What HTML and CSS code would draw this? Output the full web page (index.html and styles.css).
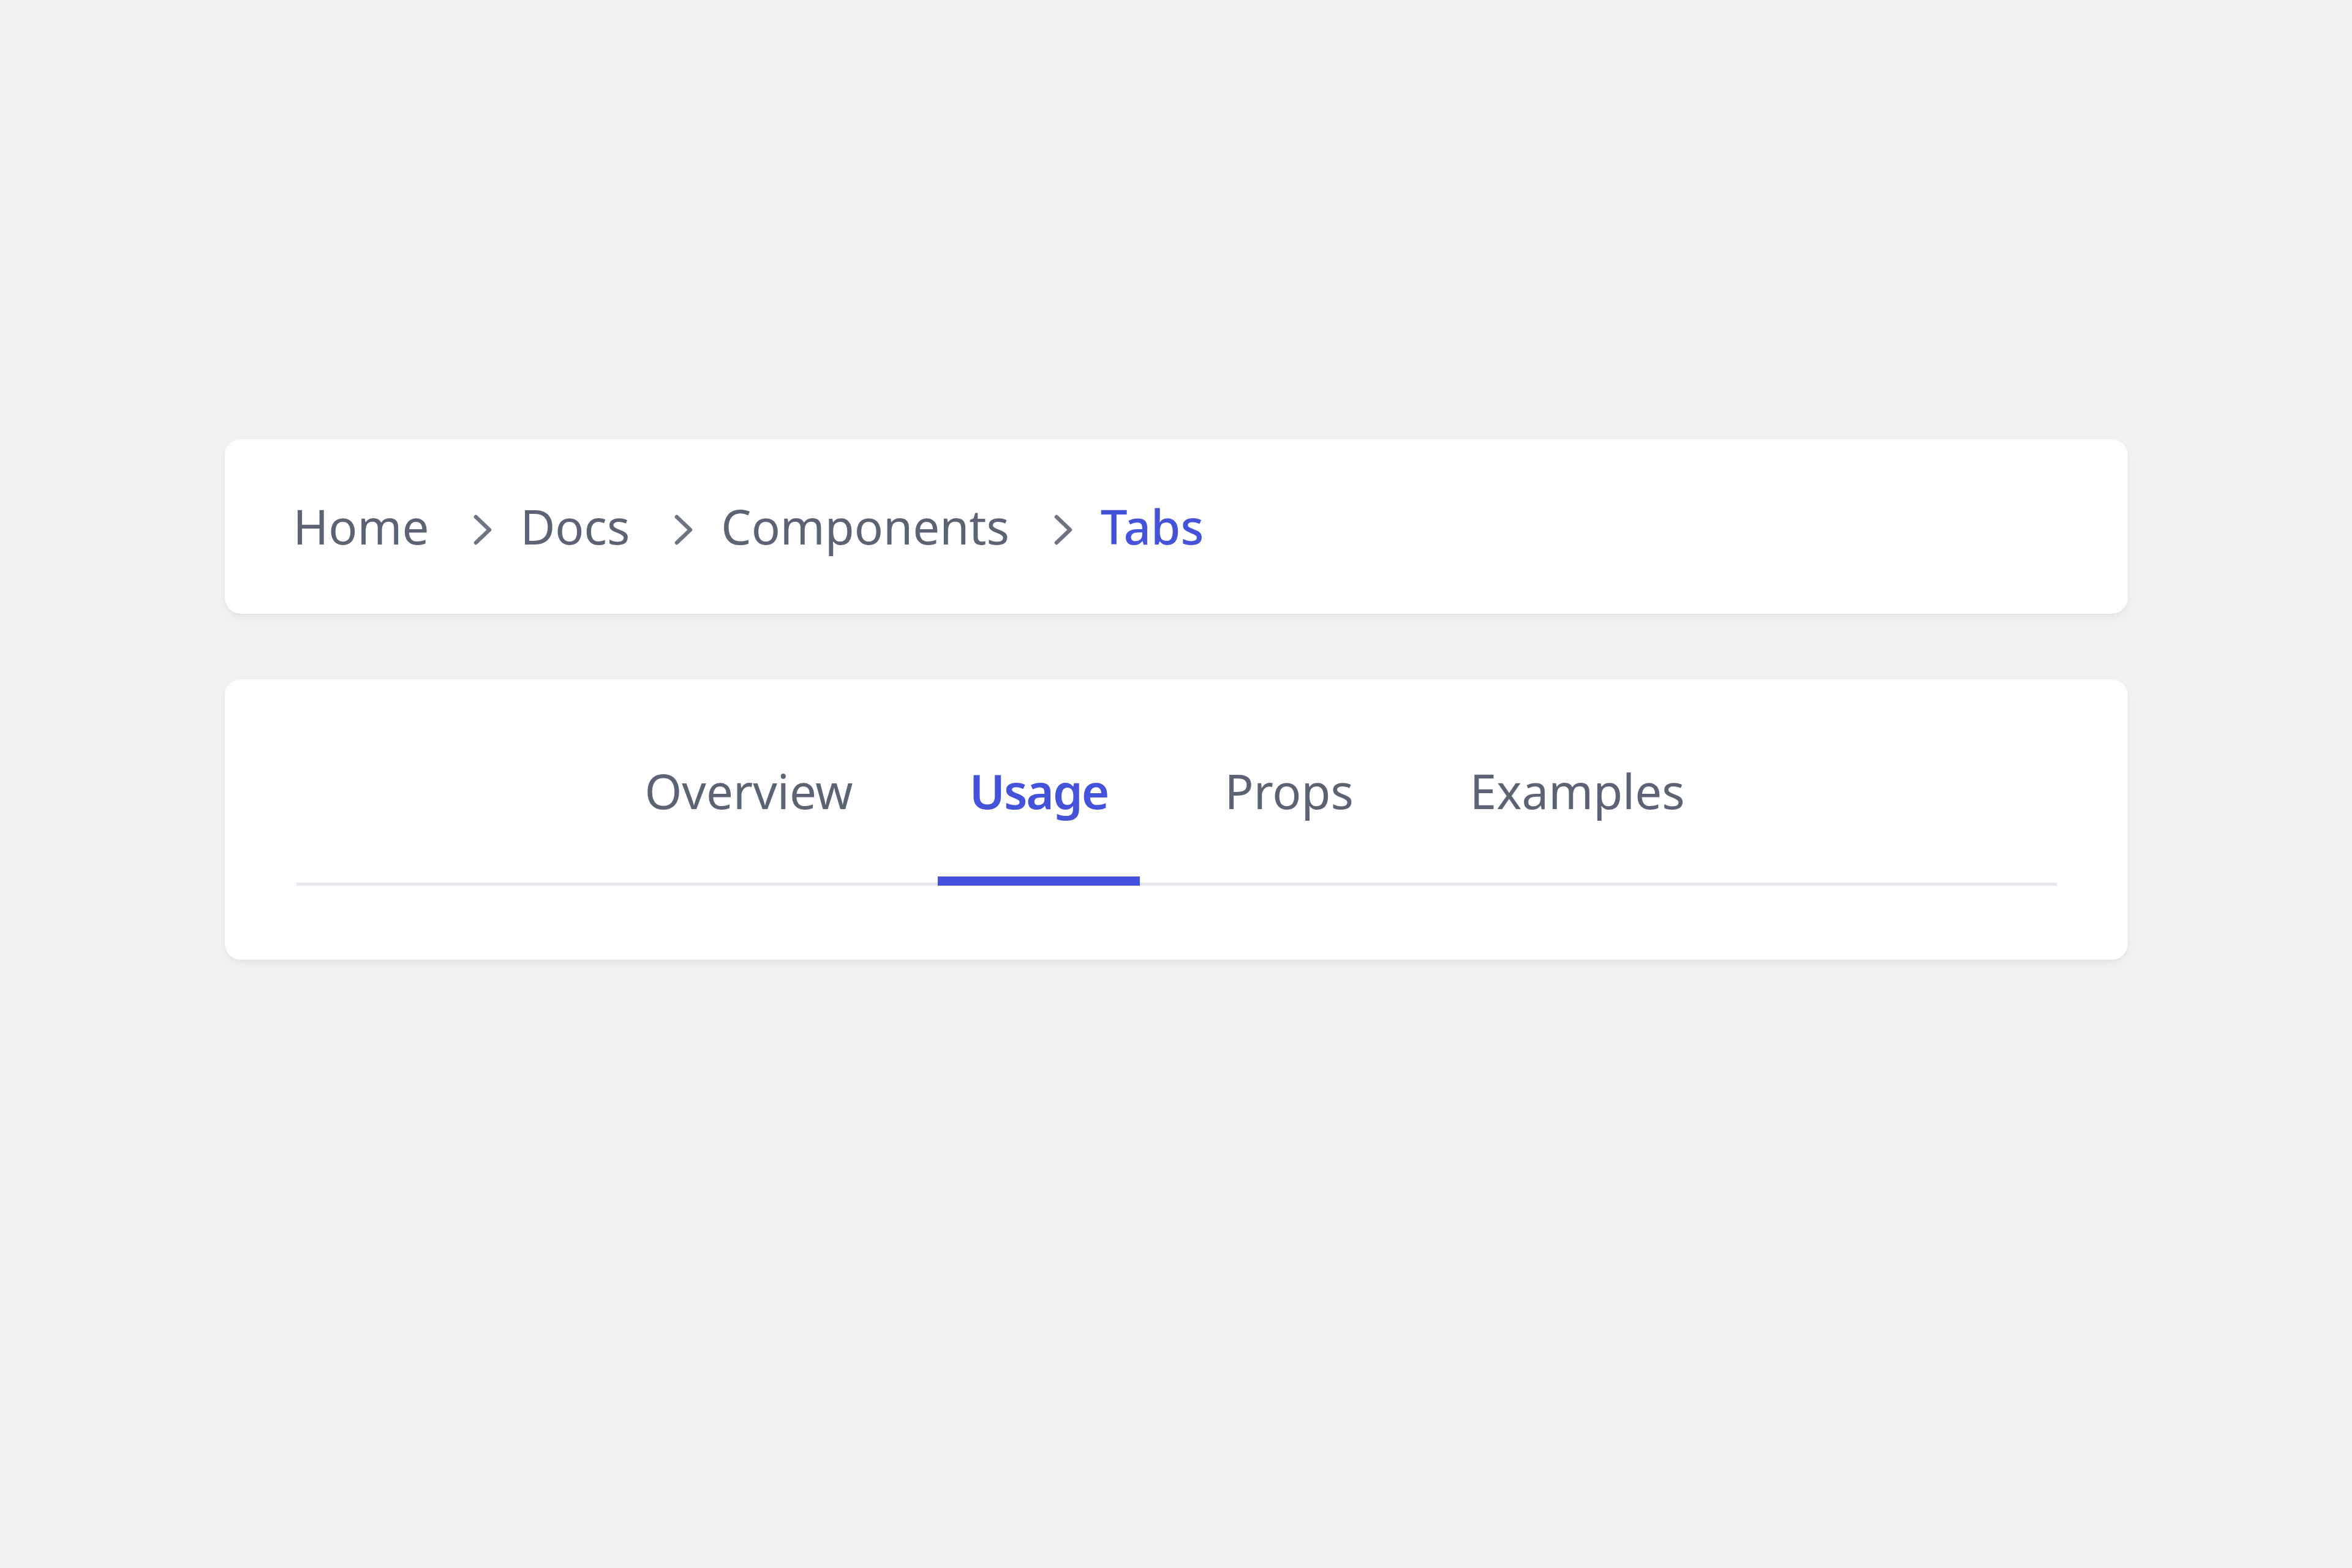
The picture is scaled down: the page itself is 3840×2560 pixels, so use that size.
FILE: index.html
```html
<!DOCTYPE html>
<html lang="en">
<head>
<meta charset="utf-8">
<title>Breadcrumb and Tabs</title>
<link rel="stylesheet" href="styles.css">
</head>
<body>
<main class="page">
  <nav class="card crumbs" aria-label="Breadcrumb">
    <a class="crumb" href="#">Home</a>
    <span class="sep"><svg viewBox="0 0 30 50" width="30" height="50"><polyline points="4,4 26,25 4,46"/></svg></span>
    <a class="crumb" href="#">Docs</a>
    <span class="sep"><svg viewBox="0 0 30 50" width="30" height="50"><polyline points="4,4 26,25 4,46"/></svg></span>
    <a class="crumb" href="#">Components</a>
    <span class="sep"><svg viewBox="0 0 30 50" width="30" height="50"><polyline points="4,4 26,25 4,46"/></svg></span>
    <span class="crumb current">Tabs</span>
  </nav>
  <section class="card tabs-card">
    <div class="tablist" role="tablist">
      <button class="tab" role="tab">Overview</button>
      <button class="tab active" role="tab">Usage</button>
      <button class="tab" role="tab">Props</button>
      <button class="tab" role="tab">Examples</button>
    </div>
  </section>
</main>
</body>
</html>
```
FILE: styles.css
```css
html, body {
  margin: 0;
  padding: 0;
  background: #f3f3f3;
  font-family: "Noto Sans", "Open Sans", sans-serif;
}
body {
  min-height: 2560px;
}
.page {
  width: 3107px;
  margin: 0 auto;
  padding-top: 717px;
  display: flex;
  flex-direction: column;
  gap: 107px;
}
.card {
  background: #ffffff;
  border-radius: 26px;
  box-shadow: 0 8px 20px rgba(0, 0, 0, 0.05), 0 2px 4px rgba(0, 0, 0, 0.04);
}
.crumbs {
  display: flex;
  align-items: center;
  padding: 88px 112px;
  font-size: 78px;
  line-height: 109px;
}
.crumb {
  color: #5c6374;
  text-decoration: none;
}
.crumb.current {
  color: #4453da;
  font-weight: 500;
}
.sep {
  display: flex;
  margin: 10px 46px 0 73px;
}
.sep svg {
  display: block;
  fill: none;
  stroke: #6e7483;
  stroke-width: 6.5;
  stroke-linecap: round;
  stroke-linejoin: round;
}
.tabs-card {
  padding: 128px 116px 121px 117px;
}
.tablist {
  display: flex;
  justify-content: center;
  gap: 86px;
  border-bottom: 5px solid #e4e6eb;
  padding-right: 38px;
}
.tab {
  position: relative;
  background: none;
  border: 0;
  margin: 0;
  padding: 0 52px 95px;
  font-family: inherit;
  font-size: 78px;
  line-height: 109px;
  color: #5c6374;
  cursor: pointer;
}
.tab.active {
  color: #4453da;
  font-weight: 600;
  letter-spacing: -2px;
}
.tab.active::after {
  content: "";
  position: absolute;
  left: 0;
  right: 0;
  bottom: -5px;
  height: 15px;
  background: #4453df;
}
```
